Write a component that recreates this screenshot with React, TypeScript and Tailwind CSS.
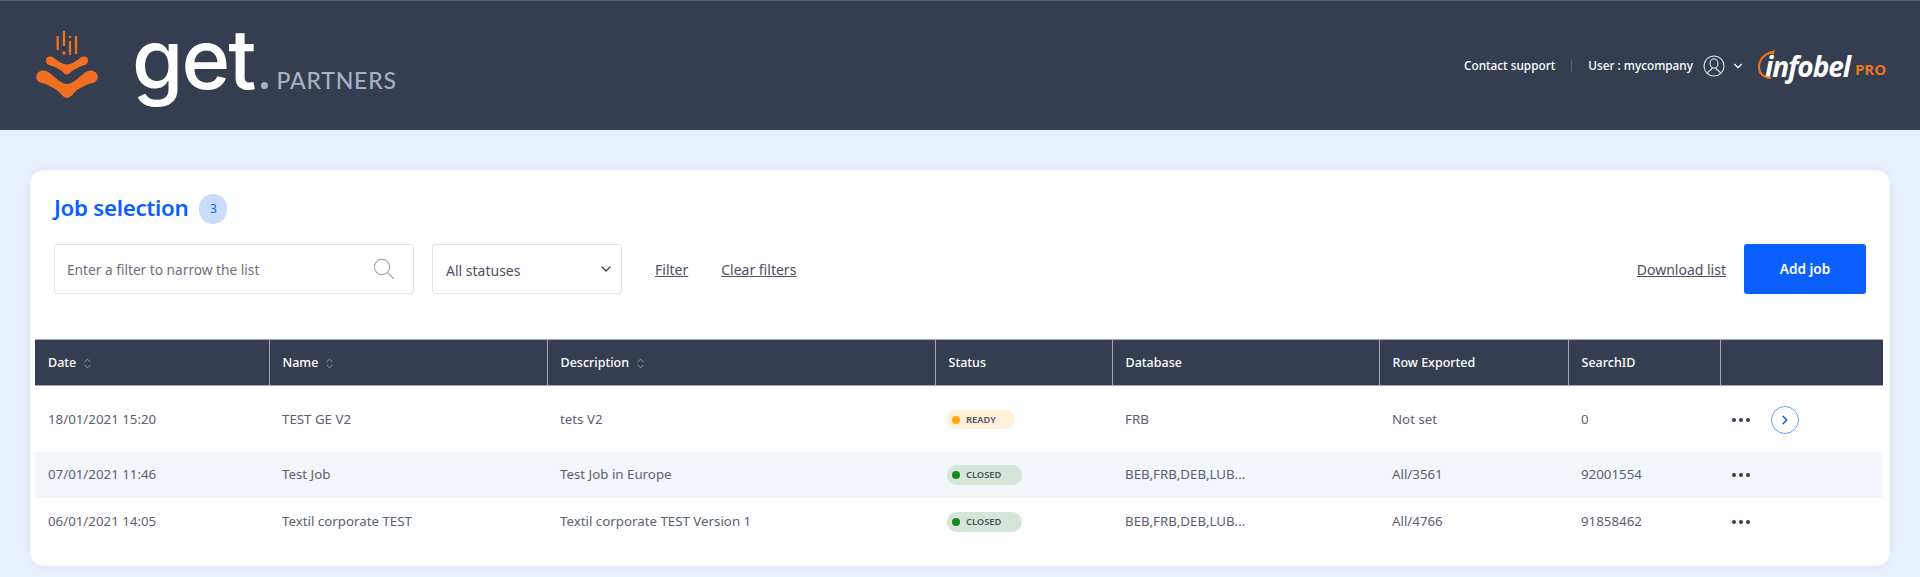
import { ChevronDown, ChevronRight, ChevronsUpDown } from "lucide-react";

type Job = {
  date: string;
  name: string;
  description: string;
  status: "READY" | "CLOSED";
  database: string;
  rows: string;
  searchId: string;
  open?: boolean;
};

const jobs: Job[] = [
  { date: "18/01/2021 15:20", name: "TEST GE V2", description: "tets V2", status: "READY", database: "FRB", rows: "Not set", searchId: "0", open: true },
  { date: "07/01/2021 11:46", name: "Test Job", description: "Test Job in Europe", status: "CLOSED", database: "BEB,FRB,DEB,LUB...", rows: "All/3561", searchId: "92001554" },
  { date: "06/01/2021 14:05", name: "Textil corporate TEST", description: "Textil corporate TEST Version 1", status: "CLOSED", database: "BEB,FRB,DEB,LUB...", rows: "All/4766", searchId: "91858462" },
];

function GetLogo() {
  return (
    <svg width="62" height="70" viewBox="0 0 62 70" fill="none" className="shrink-0 mt-[-4px]">
      <g stroke="#f26f21" strokeWidth="2.3">
        <path d="M21.7 7V21" />
        <path d="M28 2V17" />
        <path d="M34 7V9" />
        <path d="M34 12V26" />
        <path d="M40 7V25" />
      </g>
      <circle cx="28" cy="24" r="1.8" fill="#f26f21" />
      <path
        d="M11 28.5C13 27 16 27.5 18 29C22 32 27 35.5 31 35.5C35 35.5 40 32 44 29C46 27.5 49 27 51 28.5C53 30.5 52 35 49 36C44 37.5 39 40 36 42C34 44 33 45.5 31 45.5C29 45.5 28 44 26 42C23 40 18 37.5 13 36C10 35 9 30.5 11 28.5Z"
        fill="#f26f21"
      />
      <path
        d="M2 43.5C5 40.5 10 41 13 43.5C19 48 25 55 31 55C37 55 43 48 49 43.5C52 41 57 40.5 60 43.5C63 47 62 52 58 53.5C51 55 44 59 40 62C37 65 34 69 31 69C28 69 25 65 22 62C18 59 11 55 4 53.5C0 52 -1 47 2 43.5Z"
        fill="#f26f21"
      />
    </svg>
  );
}

function InfobelLogo() {
  return (
    <div className="relative flex items-baseline w-[127px] h-[34px] pl-[7px] font-['Open_Sans',sans-serif]">
      <svg width="22" height="32" viewBox="0 0 22 32" fill="none" className="absolute left-0 top-0">
        <path d="M14 3C6 5 1 11 1 18C1 24 5 28 12 29" stroke="#e8771f" strokeWidth="2.2" strokeLinecap="round" />
        <path d="M11 4L17 0.5L15.5 6Z" fill="#e8771f" />
      </svg>
      <span className="italic font-bold text-white text-[28px] leading-[34px] tracking-[-1.1px]">infobel</span>
      <span className="ml-[5px] font-bold text-[#e8771f] text-[15px] leading-none relative top-[-2px]">PRO</span>
    </div>
  );
}

function UserIcon() {
  return (
    <svg width="22" height="22" viewBox="0 0 22 22" fill="none" stroke="#dfe3ea" strokeWidth="1.1" className="ml-[10px]">
      <circle cx="11" cy="11" r="10" />
      <ellipse cx="11" cy="8.5" rx="4" ry="4.6" />
      <path d="M4.5 18.5C4.5 15.5 9 15.5 9.3 12.6M17.5 18.5C17.5 15.5 13 15.5 12.7 12.6" />
    </svg>
  );
}

function SearchIcon() {
  return (
    <svg width="22" height="22" viewBox="0 0 22 22" fill="none" stroke="#a4a9b3" strokeWidth="1.2">
      <circle cx="9" cy="9" r="7.6" />
      <path d="M14.5 14.5L21 21" />
    </svg>
  );
}

function StatusPill({ status }: { status: Job["status"] }) {
  const ready = status === "READY";
  return (
    <span
      className={
        ready
          ? "flex items-center w-[68px] h-[19px] pl-[5px] rounded-full bg-[#fff0da]"
          : "flex items-center w-[75px] h-[20px] pl-[5px] rounded-full bg-[#d3e6d8]"
      }
    >
      <span className={ready ? "size-2 rounded-full bg-[#ffa90a]" : "size-2 rounded-full bg-[#16891f]"} />
      <span className="ml-[6px] text-[9.3px] font-semibold text-[#4a5160]">{status}</span>
    </span>
  );
}

function HeadCell({ label, sortable, first }: { label: string; sortable?: boolean; first?: boolean }) {
  return (
    <th className={first ? "pl-[13px] pt-[2px] text-left text-[12.5px] font-medium" : "pl-[13px] pt-[2px] text-left text-[12.5px] font-medium border-l border-[#a3a8b4]"}>
      <span className="flex items-center gap-[5px]">
        {label}
        {sortable && <ChevronsUpDown size={13} strokeWidth={1.4} className="text-[#b0b5c0]" />}
      </span>
    </th>
  );
}

export default function App() {
  return (
    <div className="w-[1920px] h-[577px] overflow-hidden bg-[#e8f0fd] font-['Noto_Sans',sans-serif]">
      <header className="h-[130px] flex items-center justify-between bg-[#353d50] border-t border-[#5a6070] pl-[36px] pr-[35px]">
        <div className="flex items-center">
          <GetLogo />
          <div className="flex items-baseline ml-[34px] mt-[-14px] font-['Inter',sans-serif]">
            <span className="text-[83px] leading-[88px] font-medium text-white tracking-[-2px]">get</span>
            <span className="ml-[7px] size-[7px] rounded-full bg-[#a9b0c0]" />
            <span className="ml-[8px] text-[23px] font-medium font-['Lato',sans-serif] text-[#a9b0c0] tracking-[0.8px]">PARTNERS</span>
          </div>
        </div>
        <div className="flex items-center text-[11.8px] font-medium text-white">
          <span>Contact support</span>
          <span className="w-px h-[12px] mx-[16px] bg-[#596072]" />
          <span>User : mycompany</span>
          <UserIcon />
          <ChevronDown size={14} strokeWidth={2} className="ml-[6px] mr-[13px]" />
          <InfobelLogo />
        </div>
      </header>

      <main className="mx-[30px] mt-[40px] h-[396px] rounded-[14px] bg-white px-[5px] shadow-[0_0_6px_rgba(120,150,200,0.15)]">
        <div className="flex items-center pt-[24px] pl-[19px] h-[54px]">
          <h1 className="text-[22.3px] leading-[28px] mt-[-2px] font-semibold text-[#0b5fff] tracking-[-0.3px]">Job selection</h1>
          <span className="ml-[11px] flex items-center justify-center w-[28px] h-[30px] rounded-full bg-[#c9dcfb] text-[12px] text-[#0b5fff]">3</span>
        </div>

        <div className="flex items-center mt-[20px] pl-[19px] pr-[19px] text-[14px]">
          <div className="flex items-center justify-between w-[360px] h-[50px] pl-[12px] pr-[18px] rounded-[3px] border border-[#e3e4e8] text-[#6b7280]">
            <span className="text-[13.7px] pt-[2px]">Enter a filter to narrow the list</span>
            <SearchIcon />
          </div>
          <div className="flex items-center justify-between w-[190px] h-[50px] ml-[18px] pl-[13px] pr-[7px] rounded-[3px] border border-[#e3e4e8] text-[#4a5160]">
            <span className="pt-[2px]">All statuses</span>
            <ChevronDown size={16} strokeWidth={1.8} className="text-[#353d50]" />
          </div>
          <a className="ml-[33px] underline text-[#4a5160]">Filter</a>
          <a className="ml-[33px] underline text-[#4a5160]">Clear filters</a>
          <a className="ml-auto underline text-[#4a5160]">Download list</a>
          <button className="ml-[18px] w-[122px] h-[50px] rounded-[3px] bg-[#0b5fff] text-[13.6px] font-semibold text-white">Add job</button>
        </div>

        <table className="mt-[45px] w-[1848px] table-fixed border-collapse">
          <colgroup>
            <col className="w-[234px]" />
            <col className="w-[278px]" />
            <col className="w-[388px]" />
            <col className="w-[177px]" />
            <col className="w-[267px]" />
            <col className="w-[189px]" />
            <col className="w-[152px]" />
            <col className="w-[163px]" />
          </colgroup>
          <thead>
            <tr className="h-[46px] bg-[#353d50] text-white border-y border-[#a3a8b4]">
              <HeadCell label="Date" sortable first />
              <HeadCell label="Name" sortable />
              <HeadCell label="Description" sortable />
              <HeadCell label="Status" />
              <HeadCell label="Database" />
              <HeadCell label="Row Exported" />
              <HeadCell label="SearchID" />
              <HeadCell label="" />
            </tr>
          </thead>
          <tbody className="text-[13.3px] text-[#5a6170]">
            {jobs.map((job, i) => (
              <tr key={job.date} className={i === 0 ? "h-[66px] [&>td]:pt-[2px]" : i === 1 ? "h-[46px] bg-[#f3f6fb]" : "h-[46px] [&>td]:pt-[2px]"}>
                <td className="pl-[13px]">{job.date}</td>
                <td className="pl-[13px]">{job.name}</td>
                <td className="pl-[13px]">{job.description}</td>
                <td className="pl-[12px]">
                  <StatusPill status={job.status} />
                </td>
                <td className="pl-[13px]">{job.database}</td>
                <td className="pl-[13px]">{job.rows}</td>
                <td className="pl-[13px]">{job.searchId}</td>
                <td className="pl-[12px]">
                  <div className="flex items-center">
                    <span className="flex gap-[3px]">
                      <span className="size-1 rounded-full bg-[#353d50]" />
                      <span className="size-1 rounded-full bg-[#353d50]" />
                      <span className="size-1 rounded-full bg-[#353d50]" />
                    </span>
                    {job.open && (
                      <span className="ml-[21px] flex items-center justify-center size-[28px] rounded-full border border-[#6b9df5]">
                        <ChevronRight size={14} strokeWidth={3} className="text-[#0b5fff]" />
                      </span>
                    )}
                  </div>
                </td>
              </tr>
            ))}
          </tbody>
        </table>
      </main>
    </div>
  );
}
